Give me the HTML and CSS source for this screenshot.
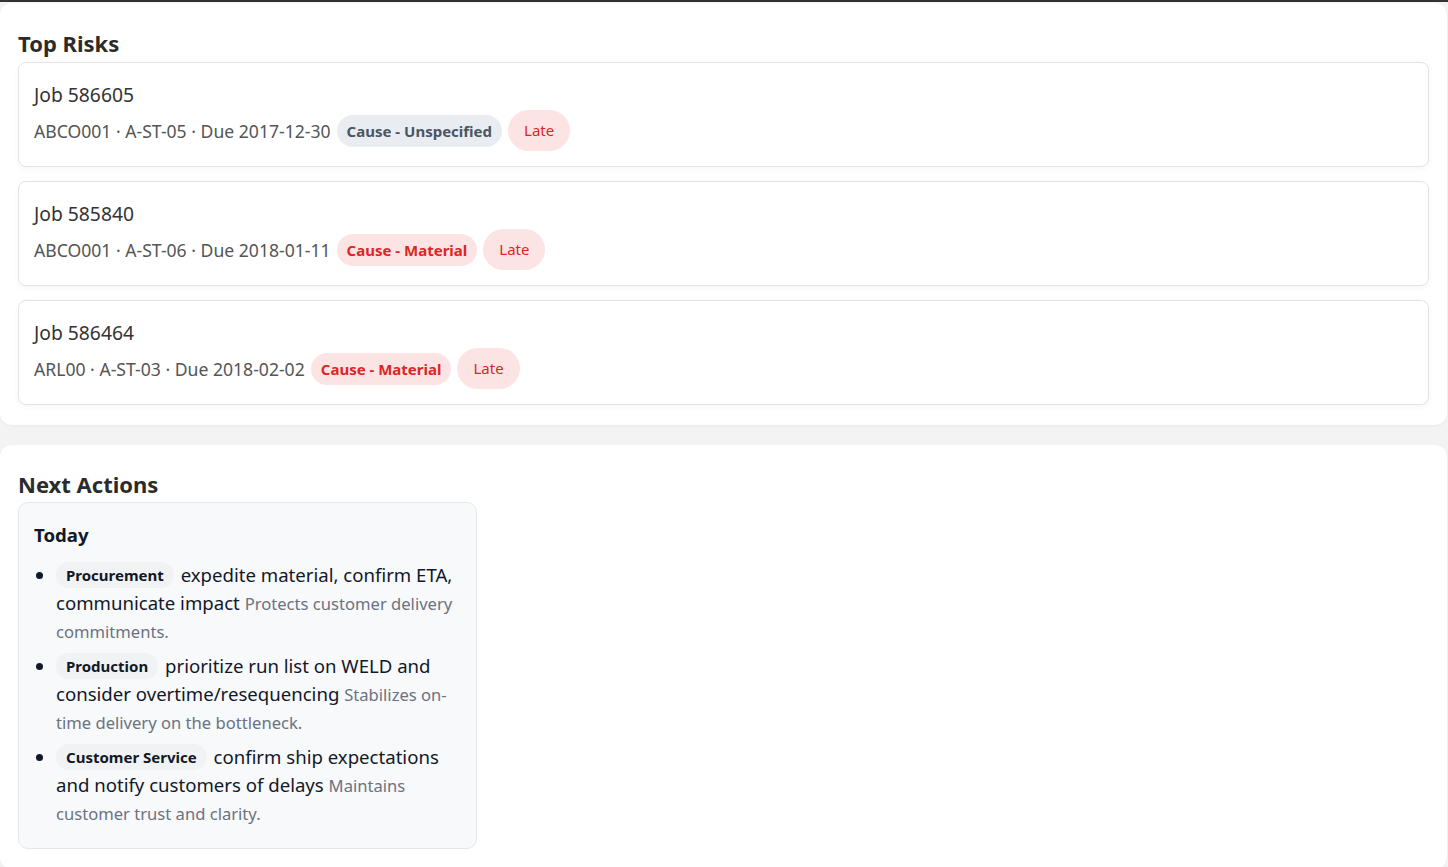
FILE: index.html
```html
<!DOCTYPE html>
<html lang="en">
<head>
    <meta charset="UTF-8">
    <meta name="viewport" content="width=device-width, initial-scale=1.0">
    <title>Job Risks</title>
    <link rel="stylesheet" href="styles.css">
</head>
<body>
    <div class="topbar"></div>

    <section class="panel">
        <h2>Top Risks</h2>
        <div class="risk-list">
            <div class="risk-card">
                <div class="risk-title">Job 586605</div>
                <div class="risk-meta">
                    <span>ABCO001 · A-ST-05 · Due 2017-12-30</span>
                    <span class="badge neutral">Cause - Unspecified</span>
                    <span class="pill late">Late</span>
                </div>
            </div>
            <div class="risk-card">
                <div class="risk-title">Job 585840</div>
                <div class="risk-meta">
                    <span>ABCO001 · A-ST-06 · Due 2018-01-11</span>
                    <span class="badge danger">Cause - Material</span>
                    <span class="pill late">Late</span>
                </div>
            </div>
            <div class="risk-card">
                <div class="risk-title">Job 586464</div>
                <div class="risk-meta">
                    <span>ARL00 · A-ST-03 · Due 2018-02-02</span>
                    <span class="badge danger">Cause - Material</span>
                    <span class="pill late">Late</span>
                </div>
            </div>
        </div>
    </section>

    <section class="panel next-panel">
        <h2>Next Actions</h2>
        <div class="actions-box">
            <h3>Today</h3>
            <ul class="actions">
                <li><span class="chip">Procurement</span> expedite material, confirm ETA, communicate impact <span class="why">Protects customer delivery commitments.</span></li>
                <li><span class="chip">Production</span> prioritize run list on WELD and consider overtime/resequencing <span class="why">Stabilizes on-time delivery on the bottleneck.</span></li>
                <li><span class="chip">Customer Service</span> confirm ship expectations and notify customers of delays <span class="why">Maintains customer trust and clarity.</span></li>
            </ul>
        </div>
    </section>
</body>
</html>
```

FILE: styles.css
```css
body {
    margin: 0;
    background: #f3f3f3;
    font-family: "Noto Sans", "Open Sans", Arial, sans-serif;
    color: #333;
}

.topbar {
    height: 2px;
    background: #333;
}

.panel {
    width: 1447px;
    box-sizing: border-box;
    background: #fff;
    border-radius: 12px;
    margin: 1px 0 20px 0;
    padding: 26px 18px 20px 18px;
    box-shadow: 0 1px 3px rgba(0, 0, 0, 0.04);
}
.next-panel { padding-top: 25px; }

.panel h2 {
    margin: 0 0 5px 0;
    font-size: 22px;
    line-height: 28px;
    font-weight: 700;
    color: #2b2b2b;
}
.next-panel h2 { margin-bottom: 4px; }

.risk-list {
    display: flex;
    flex-direction: column;
    gap: 14px;
}

.risk-card {
    border: 1px solid #e3e3e3;
    border-radius: 8px;
    padding: 19px 15px 15px 15px;
    box-shadow: 0 2px 6px rgba(0, 0, 0, 0.04);
}

.risk-title {
    font-size: 19.3px;
    line-height: 26px;
    color: #333;
    margin-bottom: 2px;
}

.risk-meta {
    display: flex;
    align-items: center;
    gap: 6px;
    font-size: 17.6px;
    color: #555;
}

.badge {
    display: inline-block;
    font-size: 15px;
    font-weight: 700;
    line-height: 32px;
    padding: 0 10px;
    border-radius: 16px;
}
.badge.neutral { background: #e9edf2; color: #4b5563; }
.badge.danger { background: #fde4e4; color: #dc2626; }

.pill {
    display: inline-block;
    font-size: 15px;
    line-height: 21px;
    padding: 10px 16px;
    border-radius: 21px;
}
.pill.late { background: #fde4e4; color: #dc2626; }

.actions-box {
    width: 459px;
    box-sizing: border-box;
    background: #f8f9fb;
    border: 1px solid #e5e7eb;
    border-radius: 10px;
    padding: 19px 15px 21px 15px;
}

.actions-box h3 {
    margin: 0 0 13px 0;
    font-size: 18.6px;
    line-height: 26px;
    font-weight: 700;
    color: #111827;
}

.actions {
    margin: 0;
    padding-left: 22px;
    font-size: 18.6px;
    line-height: 28px;
    color: #111827;
}

.actions li {
    margin-bottom: 7px;
}
.actions li:last-child { margin-bottom: 0; }

.chip {
    display: inline-block;
    background: #f1f2f4;
    font-size: 15px;
    font-weight: 700;
    line-height: 26px;
    padding: 0 10px;
    border-radius: 13px;
    margin-right: 2px;
    vertical-align: top;
    margin-top: 1px;
}

.why {
    font-size: 16.6px;
    line-height: 20px;
    color: #6b7280;
}
```
